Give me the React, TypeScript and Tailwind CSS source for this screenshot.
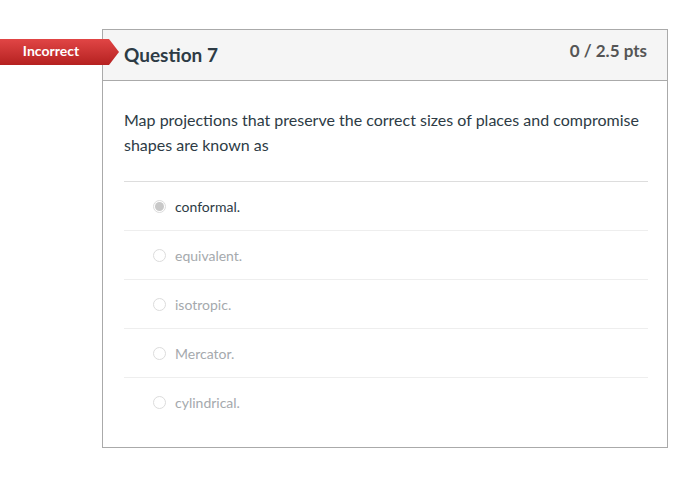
import React from "react";

const answers = [
  { t: "conformal.", sel: true },
  { t: "equivalent.", sel: false },
  { t: "isotropic.", sel: false },
  { t: "Mercator.", sel: false },
  { t: "cylindrical.", sel: false },
];

export default function App() {
  return (
    <div className="relative w-[677px] h-[480px] bg-white" style={{ fontFamily: "Lato, 'Open Sans', sans-serif" }}>
      <div className="pt-[29px] pl-[102px]">
        <div className="w-[566px] border border-[#aaaaaa]">
          <div className="h-[51px] bg-[#f5f5f5] border-b border-[#aaaaaa] flex items-start justify-between pl-[21px] pr-[20px]">
            <div className="mt-[12px] text-[19px] font-bold text-[#2d3b45] leading-[26px]">Question 7</div>
            <div className="mt-[10px] text-[17px] font-bold text-[#555555] leading-[22px]">0 / 2.5 pts</div>
          </div>
          <div className="pl-[21px] pr-[19px] pt-[26px] pb-[20px]">
            <div className="text-[16px] leading-[25px] text-[#2d3b45] pb-[24px] border-b border-[#dddddd]">
              Map projections that preserve the correct sizes of places and compromise shapes are known as
            </div>
            {answers.map((a, i) => (
              <div
                key={a.t}
                className={`h-[49px] flex items-center pl-[29px] ${i < answers.length - 1 ? "border-b border-[#eeeeee]" : ""}`}
              >
                <span className="w-[13px] h-[13px] rounded-full border border-[#dcdcdc] bg-white flex items-center justify-center mr-[9px]">
                  {a.sel && <span className="w-[9px] h-[9px] rounded-full bg-[#c8c8c8]" />}
                </span>
                <span className={`text-[14px] ${a.sel ? "text-[#2d3b45]" : "text-[#a5a9ad]"}`}>{a.t}</span>
              </div>
            ))}
          </div>
        </div>
      </div>
      <div className="absolute left-0 top-[39px] h-[26px] flex">
        <div className="w-[109px] h-[26px] bg-gradient-to-b from-[#e14545] to-[#b52020] flex items-start justify-center pt-[3px] pr-[7px] text-white text-[14px] leading-[18px] font-bold">
          Incorrect
        </div>
        <svg width="10" height="26" viewBox="0 0 10 26" className="block">
          <defs>
            <linearGradient id="g" x1="0" y1="0" x2="0" y2="1">
              <stop offset="0" stopColor="#e14545" />
              <stop offset="1" stopColor="#b52020" />
            </linearGradient>
          </defs>
          <polygon points="0,0 10,13 0,26" fill="url(#g)" />
        </svg>
      </div>
    </div>
  );
}
